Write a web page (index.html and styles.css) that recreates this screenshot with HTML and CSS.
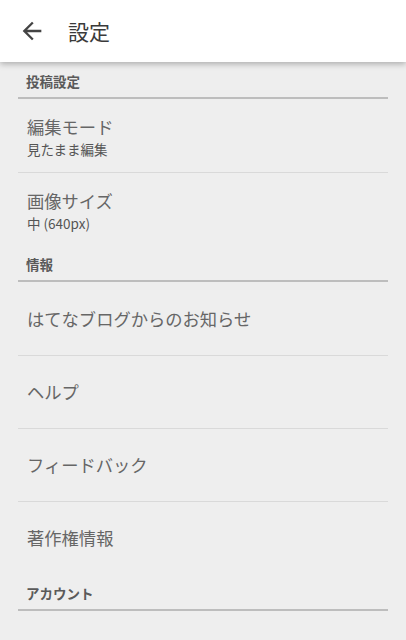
FILE: index.html
```html
<!DOCTYPE html>
<html lang="ja">
<head>
<meta charset="utf-8">
<link rel="stylesheet" href="styles.css">
</head>
<body>
<header class="appbar">
  <svg class="back" viewBox="0 0 24 24" width="28" height="28"><path d="M20 11H7.83l5.59-5.59L12 4l-8 8 8 8 1.41-1.41L7.83 13H20v-2z" fill="#444"/></svg>
  <h1 class="title">設定</h1>
</header>
<main class="content">
  <div class="section">投稿設定</div>
  <div class="item two first">
    <div class="item-title">編集モード</div>
    <div class="item-sub">見たまま編集</div>
  </div>
  <div class="item two last">
    <div class="item-title">画像サイズ</div>
    <div class="item-sub">中 (640px)</div>
  </div>
  <div class="section">情報</div>
  <div class="item one first"><div class="item-title">はてなブログからのお知らせ</div></div>
  <div class="item one"><div class="item-title">ヘルプ</div></div>
  <div class="item one"><div class="item-title">フィードバック</div></div>
  <div class="item one last"><div class="item-title">著作権情報</div></div>
  <div class="section">アカウント</div>
</main>
</body>
</html>
```
FILE: styles.css
```css
* { box-sizing: border-box; }
html, body { margin: 0; padding: 0; }
body {
  background: #eeeeee;
  font-family: "Noto Sans CJK JP", "Noto Sans", Roboto, sans-serif;
  width: 406px;
  height: 640px;
  overflow: hidden;
}
.appbar {
  height: 62px;
  background: #ffffff;
  display: flex;
  align-items: center;
  padding-left: 18px;
  box-shadow: 0 2px 6px rgba(0,0,0,0.28);
  position: relative;
  z-index: 1;
}
.back { display: block; flex: none; }
.title {
  margin: 0 0 0 22px;
  font-size: 21px;
  font-weight: 400;
  color: #3a3a3a;
  line-height: 28px;
}
.content { margin: 0 18px; }
.section {
  padding: 10px 0 7px 8px;
  font-size: 13.5px;
  line-height: 18px;
  font-weight: 700;
  color: #5a5a5a;
  border-bottom: 2px solid #bdbdbd;
}
.item {
  height: 73px;
  padding-left: 9px;
  border-bottom: 1px solid #d9d9d9;
  display: flex;
  flex-direction: column;
}
.item.first { height: 74px; }
.item.last { border-bottom: none; height: 72px; }
.item.one { justify-content: center; }
.item.two { padding-top: 16px; }
.item-title {
  font-size: 17.3px;
  line-height: 24px;
  color: #666666;
}
.item-sub {
  font-size: 13.5px;
  line-height: 18px;
  color: #555555;
  margin-top: 1px;
}
```
